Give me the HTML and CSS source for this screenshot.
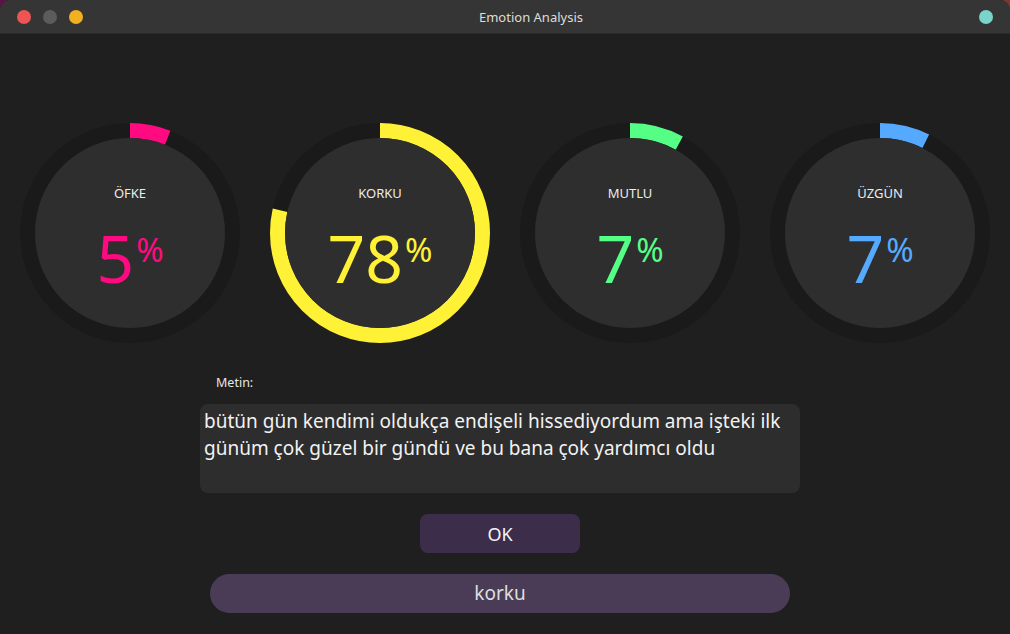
FILE: index.html
```html
<!DOCTYPE html>
<html lang="tr">
<head>
<meta charset="utf-8">
<title>Emotion Analysis</title>
<link rel="stylesheet" href="styles.css">
</head>
<body>
<div class="window">
  <header class="titlebar">
    <div class="lights">
      <span class="light red"></span>
      <span class="light grey"></span>
      <span class="light yellow"></span>
    </div>
    <div class="title">Emotion Analysis</div>
    <span class="light teal"></span>
  </header>

  <main class="content">
    <section class="gauges">
      <div class="gauge pink">
        <svg class="ring" viewBox="0 0 220 220" width="220" height="220">
          <g transform="rotate(-90 110 110)">
            <circle class="track" cx="110" cy="110" r="102.5"/>
            <circle class="arc" cx="110" cy="110" r="102.5" style="stroke-dasharray: 38.5 700"/>
          </g>
          <circle class="face" cx="110" cy="110" r="95"/>
        </svg>
        <div class="readout">
          <div class="label">ÖFKE</div>
          <div class="value">5<span class="pct">%</span></div>
        </div>
      </div>
      <div class="gauge yellow">
        <svg class="ring" viewBox="0 0 220 220" width="220" height="220">
          <g transform="rotate(-90 110 110)">
            <circle class="track" cx="110" cy="110" r="102.5"/>
            <circle class="arc" cx="110" cy="110" r="102.5" style="stroke-dasharray: 505.4 700"/>
          </g>
          <circle class="face" cx="110" cy="110" r="95"/>
        </svg>
        <div class="readout">
          <div class="label">KORKU</div>
          <div class="value">78<span class="pct">%</span></div>
        </div>
      </div>
      <div class="gauge green">
        <svg class="ring" viewBox="0 0 220 220" width="220" height="220">
          <g transform="rotate(-90 110 110)">
            <circle class="track" cx="110" cy="110" r="102.5"/>
            <circle class="arc" cx="110" cy="110" r="102.5" style="stroke-dasharray: 51.3 700"/>
          </g>
          <circle class="face" cx="110" cy="110" r="95"/>
        </svg>
        <div class="readout">
          <div class="label">MUTLU</div>
          <div class="value">7<span class="pct">%</span></div>
        </div>
      </div>
      <div class="gauge blue">
        <svg class="ring" viewBox="0 0 220 220" width="220" height="220">
          <g transform="rotate(-90 110 110)">
            <circle class="track" cx="110" cy="110" r="102.5"/>
            <circle class="arc" cx="110" cy="110" r="102.5" style="stroke-dasharray: 47.4 700"/>
          </g>
          <circle class="face" cx="110" cy="110" r="95"/>
        </svg>
        <div class="readout">
          <div class="label">ÜZGÜN</div>
          <div class="value">7<span class="pct">%</span></div>
        </div>
      </div>
    </section>

    <section class="form">
      <div class="field-label">Metin:</div>
      <div class="textbox">bütün gün kendimi oldukça endişeli hissediyordum ama işteki ilk günüm çok güzel bir gündü ve bu bana çok yardımcı oldu</div>
      <button class="ok">OK</button>
      <div class="result">korku</div>
    </section>
  </main>
</div>
</body>
</html>
```

FILE: styles.css
```css
* { box-sizing: border-box; }

html, body {
  margin: 0;
  padding: 0;
  width: 1010px;
  height: 634px;
  overflow: hidden;
}

body {
  background: linear-gradient(to right, #5b1448 0%, #3a1a30 50%, #7a3b2a 100%);
  font-family: "Noto Sans", "Open Sans", sans-serif;
  color: #e6e6e6;
}

.window {
  width: 1010px;
  height: 634px;
  background: #1f1f1f;
  border-radius: 10px 10px 0 0;
  overflow: hidden;
  display: flex;
  flex-direction: column;
}

.titlebar {
  height: 34px;
  flex: none;
  background: #353535;
  border-bottom: 1px solid #2a2a2a;
  display: flex;
  align-items: center;
  padding: 0 17px;
}

.lights {
  display: flex;
  gap: 12px;
}

.light {
  width: 14px;
  height: 14px;
  border-radius: 50%;
  display: block;
}
.light.red { background: #ee5452; }
.light.grey { background: #5c5c5c; }
.light.yellow { background: #f1b01f; }
.light.teal { background: #7ad4cb; }

.title {
  flex: 1;
  text-align: center;
  font-size: 13px;
  color: #dcdcdc;
}

.content {
  flex: 1;
  display: flex;
  flex-direction: column;
}

.gauges {
  display: flex;
  gap: 30px;
  padding: 89px 20px 0;
}

.gauge {
  width: 220px;
  height: 220px;
  display: grid;
}

.gauge > * {
  grid-area: 1 / 1;
}

.ring {
  display: block;
}

.track {
  fill: none;
  stroke: #1a1a1a;
  stroke-width: 15;
}

.arc {
  fill: none;
  stroke-width: 15;
  stroke-linecap: butt;
}

.face { fill: #2e2e2e; }

.pink { color: #ff0a80; }
.yellow { color: #fff236; }
.green { color: #55ff86; }
.blue { color: #55aaff; }

.pink .arc { stroke: #ff0a80; }
.yellow .arc { stroke: #fff236; }
.green .arc { stroke: #55ff86; }
.blue .arc { stroke: #55aaff; }

.readout {
  display: flex;
  flex-direction: column;
  align-items: center;
  padding-top: 60px;
}

.label {
  font-size: 13px;
  line-height: 20px;
  color: #ececec;
}

.value {
  margin-top: 21px;
  font-size: 66px;
  line-height: 66px;
  font-weight: 400;
}

.pct {
  font-size: 33px;
  line-height: 33px;
  vertical-align: 21px;
  margin-left: 2px;
}

.form {
  display: flex;
  flex-direction: column;
  align-items: center;
  padding: 31px 10px 0 0;
}

.field-label {
  width: 600px;
  padding-left: 16px;
  font-size: 12.5px;
  line-height: 18px;
  color: #e6e6e6;
}

.textbox {
  margin-top: 12px;
  width: 600px;
  height: 89px;
  background: #2d2d2d;
  border-radius: 8px;
  padding: 4px 4px;
  font-size: 19px;
  line-height: 27px;
  color: #f2f2f2;
}

.ok {
  margin-top: 21px;
  width: 160px;
  height: 39px;
  border: none;
  border-radius: 8px;
  background: #3c2d4b;
  color: #f4f4f4;
  font-family: "Noto Sans", "Open Sans", sans-serif;
  font-size: 18px;
  padding: 0;
}

.result {
  margin-top: 21px;
  width: 580px;
  height: 39px;
  border-radius: 20px;
  background: #4a3c57;
  color: #dedede;
  font-size: 19px;
  line-height: 39px;
  text-align: center;
}
```
